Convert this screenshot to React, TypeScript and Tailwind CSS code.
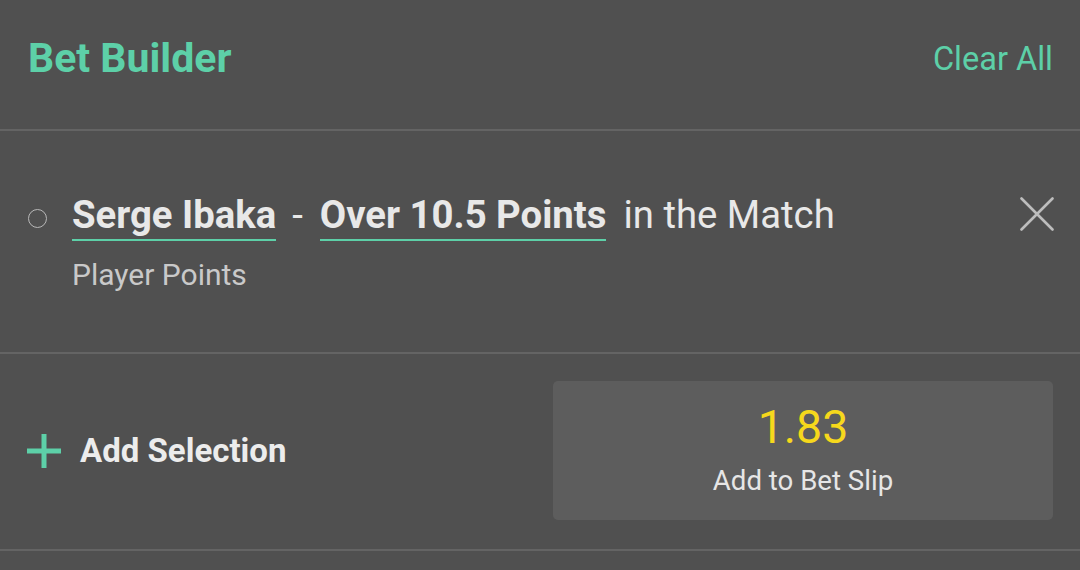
const GREEN = 'text-[#5dd0a8]'

export default function App() {
  return (
    <div
      className="w-[1080px] h-[570px] bg-[#505050] overflow-hidden"
      style={{ fontFamily: 'Roboto, "Noto Sans", sans-serif' }}
    >
      {/* header */}
      <header className="h-[131px] flex items-center justify-between pl-[28px] pr-[27px] border-b-2 border-[#646464]">
        <h1 className={`text-[41px] font-bold ${GREEN} leading-none -mt-[12px]`}>Bet Builder</h1>
        <button type="button" className={`text-[32.5px] ${GREEN} leading-none -mt-[11px]`}>
          Clear All
        </button>
      </header>

      {/* selection row */}
      <section className="h-[223px] flex items-start pl-[28px] pr-[26px] pt-[59px] border-b-2 border-[#646464]">
        <div className="w-[44px] pt-[19px] shrink-0">
          <span className="block w-[19px] h-[19px] rounded-full border-[1.5px] border-[#b8b8b8]" />
        </div>
        <div className="flex-1 min-w-0">
          <div className="flex items-baseline text-[38.3px] text-[#e8e8e8] leading-[48px]">
            <span className="font-bold border-b-2 border-[#5dd0a8] leading-[49px]">Serge Ibaka</span>
            <span className="ml-[16px] mr-[17px]">-</span>
            <span className="font-bold border-b-2 border-[#5dd0a8] leading-[49px]">Over 10.5 Points</span>
            <span className="ml-[17px]">in the Match</span>
          </div>
          <div className="mt-[15px] text-[30px] text-[#c9c9c9] leading-[38px]">Player Points</div>
        </div>
        <button type="button" className="mt-[7px] shrink-0 text-[#bdbdbd]">
          <svg width="34" height="34" viewBox="0 0 34 34" fill="none" stroke="currentColor" strokeWidth="2.6" strokeLinecap="round">
            <path d="M1.5 1.5 32.5 32.5M32.5 1.5 1.5 32.5" />
          </svg>
        </button>
      </section>

      {/* footer */}
      <footer className="h-[197px] flex items-center justify-between pl-[27px] pr-[27px] border-b-2 border-[#646464]">
        <button type="button" className="flex items-center gap-[19px] -mt-[2px]">
          <svg width="34" height="34" viewBox="0 0 34 34" fill="none" stroke="#5dd0a8" strokeWidth="5">
            <path d="M17 0v34M0 17h34" />
          </svg>
          <span className="text-[33px] font-bold text-[#ececec] leading-none">Add Selection</span>
        </button>
        <button
          type="button"
          className="w-[500px] h-[139px] -mt-[2px] rounded-[5px] bg-[#5d5d5d] flex flex-col items-center justify-center"
        >
          <span className="text-[46.5px] text-[#f6d81c] leading-none -mt-[2px]">1.83</span>
          <span className="mt-[16px] text-[27.6px] text-[#e6e6e6] leading-none">Add to Bet Slip</span>
        </button>
      </footer>
    </div>
  )
}
